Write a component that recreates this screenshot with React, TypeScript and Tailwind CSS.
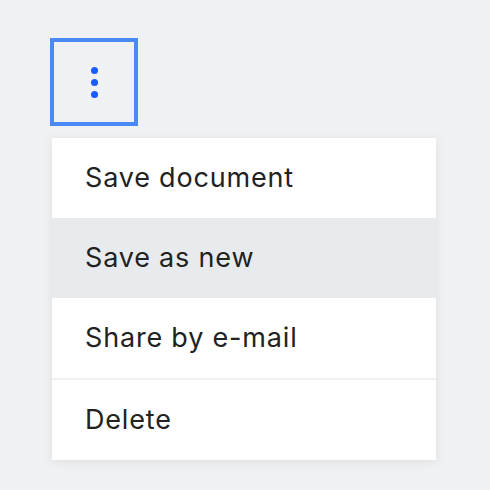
const ITEMS = ["Save document", "Save as new", "Share by e-mail", "Delete"];

export default function App() {
  return (
    <div className="w-[490px] h-[490px] bg-[#f0f1f3] pt-[38px] pl-[50px]" style={{ fontFamily: "Inter, 'Noto Sans', sans-serif" }}>
      <button className="w-[88px] h-[88px] border-4 border-[#4a8af8] flex flex-col items-center justify-center gap-[5px]">
        <span className="w-[7px] h-[7px] rounded-full bg-[#1a5cff]" />
        <span className="w-[7px] h-[7px] rounded-full bg-[#1a5cff]" />
        <span className="w-[7px] h-[7px] rounded-full bg-[#1a5cff]" />
      </button>
      <div className="mt-[12px] ml-[2px] w-[384px] bg-white shadow-[0_2px_10px_rgba(0,0,0,0.08)]">
        {ITEMS.map((label, i) => (
          <div
            key={label}
            className={`h-[80px] flex items-center pl-[33px] text-[27px] tracking-[0.03em] text-[#222] ${
              i === 1 ? "bg-[#e8ebee]" : ""
            } ${i === 3 ? "border-t-2 border-[#eff0f2] h-[82px]" : ""}`}
          >
            {label}
          </div>
        ))}
      </div>
    </div>
  );
}
